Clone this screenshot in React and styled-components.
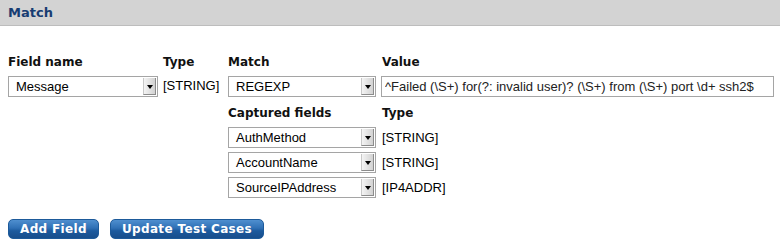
import React from "react";
import styled, { createGlobalStyle } from "styled-components";

const Global = createGlobalStyle`
  html, body {
    margin: 0;
    padding: 0;
    background: #fff;
  }
  body {
    font-family: "Liberation Sans", Arial, sans-serif;
    font-size: 13px;
    color: #000;
  }
`;

const Panel = styled.div`
  width: 780px;
`;

const Header = styled.div`
  height: 26px;
  background: #d3d3d3;
  border-bottom: 1px solid #bdbdbd;
  box-sizing: border-box;
  padding: 5px 8px 0;
  h2 {
    margin: 0;
    font-family: "DejaVu Sans", sans-serif;
    font-size: 13px;
    font-weight: bold;
    color: #183d72;
  }
`;

const Grid = styled.div`
  display: grid;
  grid-template-columns: 155px 65px 154px 392px;
  padding: 29px 0 0 8px;
  align-items: start;
`;

const Label = styled.div`
  font-family: "DejaVu Sans", sans-serif;
  font-size: 12px;
  font-weight: bold;
  color: #111;
  height: ${(p) => p.$h || 21}px;
  margin-top: ${(p) => p.$mt || 0}px;
  line-height: 14px;
`;

const TypeText = styled.div`
  line-height: 15px;
  padding-top: ${(p) => p.$pt || 0}px;
  height: ${(p) => p.$h || 26}px;
  box-sizing: border-box;
`;

const Cell = styled.div`
  display: flex;
  flex-direction: column;
  gap: ${(p) => p.$gap || 0}px;
`;

const SelectBox = styled.div`
  display: flex;
  align-items: stretch;
  width: ${(p) => p.$w}px;
  height: ${(p) => p.$h}px;
  box-sizing: border-box;
  border: 1px solid #a5a5a5;
  background: #fff;
  span {
    flex: 1;
    padding-left: 7px;
    line-height: ${(p) => p.$h - 2}px;
    white-space: nowrap;
    overflow: hidden;
  }
`;

const Arrow = styled.div`
  width: 11px;
  margin: 1px;
  border-left: 1px solid #c8c8c8;
  background: linear-gradient(to right, #f4f4f4, #d2d2d2);
  border-right: 1px solid #8c8c8c;
  border-bottom: 1px solid #8c8c8c;
  display: flex;
  align-items: center;
  justify-content: center;
  &::after {
    content: "";
    border-left: 3px solid transparent;
    border-right: 3px solid transparent;
    border-top: 4px solid #000;
    margin-top: 2px;
  }
`;

const Select = ({ value, w, h }) => (
  <SelectBox $w={w} $h={h}>
    <span>{value}</span>
    <Arrow />
  </SelectBox>
);

const ValueInput = styled.input`
  width: 393px;
  height: 21px;
  margin-left: -1px;
  box-sizing: border-box;
  border: 1px solid #a5a5a5;
  padding: 0 0 0 3px;
  font-family: "Liberation Sans", Arial, sans-serif;
  font-size: 13px;
  color: #222;
  outline: none;
`;

const Buttons = styled.div`
  display: flex;
  gap: 11px;
  padding: 21px 0 0 8px;
`;

const Button = styled.button`
  height: 20px;
  padding: 0 11px;
  border: 1px solid #1d5a9a;
  border-radius: 5px;
  background: linear-gradient(to bottom, #4f8fcf 0%, #2f70b5 45%, #1c5a9e 60%, #184e8c 100%);
  color: #fff;
  font-family: "DejaVu Sans", sans-serif;
  font-size: 12px;
  font-weight: bold;
  letter-spacing: 0.35px;
  line-height: 18px;
  cursor: pointer;
`;

const captured = [
  { name: "AuthMethod", type: "[STRING]" },
  { name: "AccountName", type: "[STRING]" },
  { name: "SourceIPAddress", type: "[IP4ADDR]" },
];

export default function App() {
  return (
    <Panel>
      <Global />
      <Header>
        <h2>Match</h2>
      </Header>
      <Grid>
        <Label>Field name</Label>
        <Label>Type</Label>
        <Label>Match</Label>
        <Label>Value</Label>

        <Select value="Message" w={150} h={21} />
        <TypeText $pt={2}>[STRING]</TypeText>
        <Cell>
          <Select value="REGEXP" w={148} h={21} />
          <Label $h={21} $mt={9}>Captured fields</Label>
          <Cell $gap={4}>
            {captured.map((c) => (
              <Select key={c.name} value={c.name} w={148} h={21} />
            ))}
          </Cell>
        </Cell>
        <Cell>
          <ValueInput
            readOnly
            value="^Failed (\S+) for(?: invalid user)? (\S+) from (\S+) port \d+ ssh2$"
          />
          <Label $h={21} $mt={9}>Type</Label>
          <Cell $gap={4}>
            {captured.map((c) => (
              <TypeText key={c.name} $h={21} $pt={3}>
                {c.type}
              </TypeText>
            ))}
          </Cell>
        </Cell>
      </Grid>
      <Buttons>
        <Button>Add Field</Button>
        <Button>Update Test Cases</Button>
      </Buttons>
    </Panel>
  );
}
